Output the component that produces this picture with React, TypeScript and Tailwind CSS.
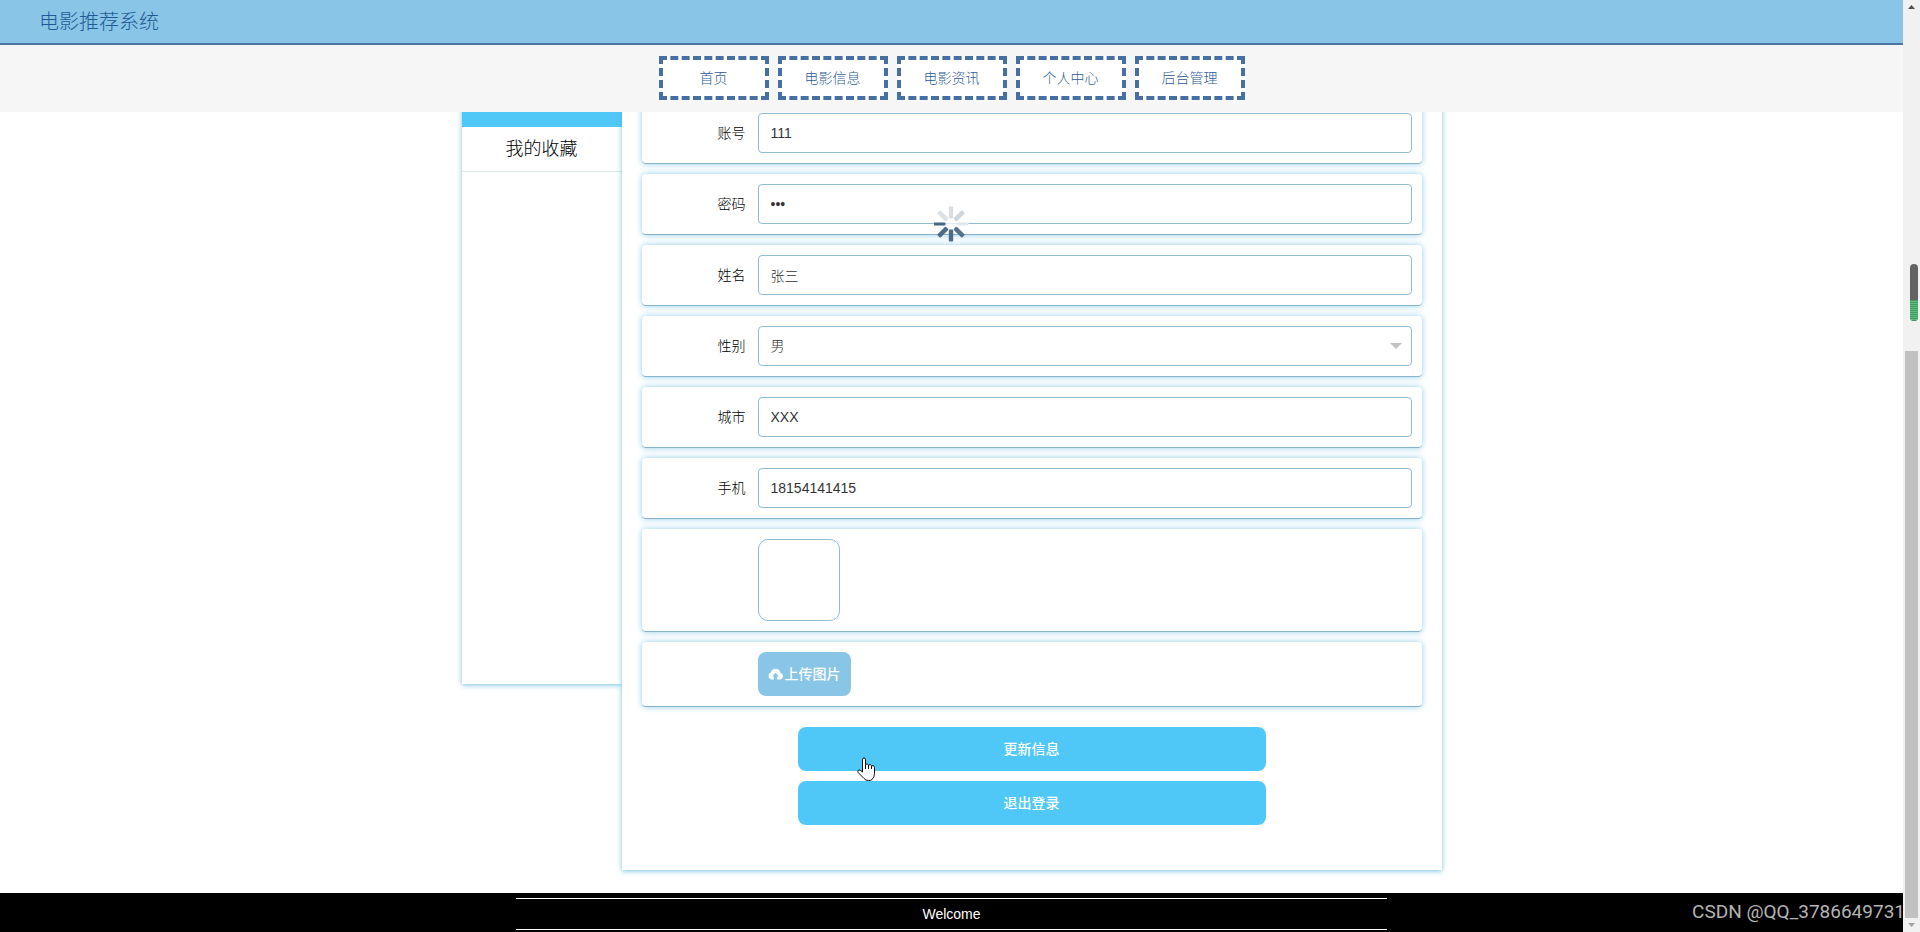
const navItems = ['首页', '电影信息', '电影资讯', '个人中心', '后台管理']

const labelClass = 'w-[106px] shrink-0 pr-3 text-right text-sm font-light text-black'
const fieldClass =
  'block h-10 w-full appearance-none rounded-[4px] border border-[#8fbdd3] bg-white px-3 text-sm font-light text-[#333] outline-none'
const rowClass =
  'flex items-center rounded-[4px] border-b border-[#86b4cd] bg-white p-[10px] shadow-[0_0_6px_rgba(100,185,222,0.7)]'
const actionClass = 'h-11 w-3/5 rounded-lg bg-[#50c8f7] text-sm font-medium text-white'

const fields = [
  { id: 'account', label: '账号', type: 'text', value: '111' },
  { id: 'password', label: '密码', type: 'password', value: '111' },
  { id: 'name', label: '姓名', type: 'text', value: '张三' },
  { id: 'gender', label: '性别', type: 'select', value: '男' },
  { id: 'city', label: '城市', type: 'text', value: 'XXX' },
  { id: 'mobile', label: '手机', type: 'text', value: '18154141415' },
]

// clockwise, starting at the top
const spokes = ['#d9dee3', '#cfd6dc', '#e3e8eb', '#58718a', '#4d6a86', '#4d6a86', '#456786', '#dce1e5']

function Spinner() {
  return (
    <svg
      className="pointer-events-none absolute top-[206px] left-1/2 z-20 size-9 -translate-x-1/2"
      viewBox="-17 -18 36 36"
      aria-hidden="true"
    >
      <circle r="6" fill="#fff" fillOpacity="0.7" />
      {spokes.map((color, i) => (
        <rect
          key={i}
          x={i === 2 || i === 6 ? -1.5 : -2.2}
          y="-17.5"
          width={i === 2 || i === 6 ? 3 : 4.4}
          height="12"
          rx="1"
          fill={color}
          transform={`rotate(${i * 45})`}
        />
      ))}
    </svg>
  )
}

function HandCursor() {
  return (
    <svg
      className="pointer-events-none absolute top-[30px] left-[59px]"
      width="19"
      height="25"
      viewBox="0 0 19 25"
      aria-hidden="true"
    >
      <path
        d="M5.5 15V2.6Q5.5 1 7 1T8.500 2.600V7.500Q10.500 6.200 11.500 8Q13.500 6.800 14.500 8.700Q17.500 7.800 17.500 10.500V16.500Q17.500 20 15 22.500Q14 23.500 11.500 23.500Q8.500 23.500 7 21.500L1.200 15.500Q.2 13.800 1.500 13Q2.800 12.400 5.500 15Z"
        fill="#fff"
        stroke="#111"
        strokeLinejoin="round"
      />
      <path d="M8.500 7.500V12M11.500 8V12M14.500 8.700V12" stroke="#111" fill="none" />
    </svg>
  )
}

function CloudUpload() {
  return (
    <svg width="15" height="12" viewBox="0 0 15 12" aria-hidden="true">
      <path
        d="M12.300 4.800A4.800 4.800 0 0 0 3 4.200A3.800 3.800 0 0 0 3.800 11.500H5.800V8.500H4.200L7.500 4.800L10.800 8.500H9.200V11.500H11.500A3.400 3.400 0 0 0 12.300 4.800Z"
        fill="#fff"
      />
    </svg>
  )
}

function ScrollRail() {
  return (
    <aside className="relative flex w-[17px] shrink-0 flex-col items-center bg-[#f1f1f1]" aria-hidden="true">
      <div className="flex h-[351px] justify-center pt-[5px]">
        <svg width="7" height="4" viewBox="0 0 7 4">
          <path d="M0 4L3.500 0L7 4Z" fill="#505050" />
        </svg>
      </div>
      <div className="w-[13px] flex-1 bg-[#c1c1c1]" />
      <div className="flex h-[14px] items-center">
        <svg width="7" height="4" viewBox="0 0 7 4">
          <path d="M0 0L3.500 4L7 0Z" fill="#a3a3a3" />
        </svg>
      </div>
      <div className="absolute top-[264px] right-[2px] flex h-[57px] w-2 flex-col overflow-hidden rounded-full bg-[#636363]">
        <div className="mt-9 flex-1 bg-[repeating-linear-gradient(#3f9a5e_0_1px,#62bd80_1px_2px)]" />
      </div>
    </aside>
  )
}

export default function App() {
  return (
    <div className="relative flex min-h-screen overflow-hidden bg-white font-['Liberation_Sans','Noto_Sans_CJK_SC',sans-serif]">
      <div className="relative flex min-w-0 flex-1 flex-col">
        <header className="relative z-10">
          <div className="flex h-[45px] items-center border-b-2 border-[#4a75a0] bg-[#88c5e6] pl-[39px]">
            <h1 className="text-xl font-light text-[#1f5a94]">电影推荐系统</h1>
          </div>
          <nav className="flex justify-center gap-[9px] bg-[#f6f6f6] pt-[11px] pb-3">
            {navItems.map((item) => (
              <a
                key={item}
                href="#"
                className="flex h-11 w-[110px] items-center justify-center border-4 border-dashed border-[#4670a3] bg-white text-sm font-light text-[#2f5c96]"
              >
                {item}
              </a>
            ))}
          </nav>
        </header>

        <div className="flex-1 overflow-hidden">
          <div className="mx-auto -mt-[29px] flex w-[980px] items-start">
            <aside className="h-[601px] w-40 bg-white shadow-[0_1px_5px_rgba(80,175,218,0.8)]">
              <div className="h-11 bg-[#50c8f7]" />
              <a
                href="#"
                className="flex h-[45px] items-center justify-center border-b border-[#dfe8e8] text-lg font-light text-black"
              >
                我的收藏
              </a>
            </aside>

            <main className="relative flex-1 bg-white p-5 pb-[45px] shadow-[0_1px_5px_rgba(80,175,218,0.8)]">
              <form className="flex flex-col gap-[10px]">
                {fields.map((field) => (
                  <div key={field.id} className={rowClass}>
                    <label htmlFor={field.id} className={labelClass}>
                      {field.label}
                    </label>
                    {field.type === 'select' ? (
                      <div className="relative flex-1">
                        <select id={field.id} className={fieldClass}>
                          <option>{field.value}</option>
                        </select>
                        <svg
                          className="pointer-events-none absolute top-[17px] right-[10px]"
                          width="12"
                          height="6"
                          viewBox="0 0 12 6"
                          aria-hidden="true"
                        >
                          <path d="M0 0H12L6 6Z" fill="#c2c2c2" />
                        </svg>
                      </div>
                    ) : (
                      <input id={field.id} type={field.type} defaultValue={field.value} className={fieldClass} />
                    )}
                  </div>
                ))}
                <div className={rowClass}>
                  <div className="ml-[106px] size-[82px] rounded-[10px] border border-[#8fbdd3]" />
                </div>
                <div className={rowClass}>
                  <button
                    type="button"
                    className="ml-[106px] flex h-11 w-[93px] items-center justify-center gap-[2px] rounded-lg bg-[#88c5e6] text-sm font-medium text-white"
                  >
                    <CloudUpload />
                    上传图片
                  </button>
                </div>
                <div className="relative mx-auto mt-[10px] flex w-full flex-col items-center gap-[10px]">
                  <button type="button" className={actionClass}>
                    更新信息
                  </button>
                  <button type="button" className={actionClass}>
                    退出登录
                  </button>
                  <div className="pointer-events-none absolute inset-y-0 w-3/5">
                    <HandCursor />
                  </div>
                </div>
              </form>
            </main>
          </div>
        </div>

        <footer className="bg-black pt-[5px] pb-[2px]">
          <p className="mx-auto flex h-8 w-[871px] items-center justify-center border-y border-white text-sm text-white">
            Welcome
          </p>
        </footer>
        <Spinner />
      </div>
      <ScrollRail />
      <p className="pointer-events-none absolute right-[15px] bottom-[6px] font-[Roboto,sans-serif] text-[19px] leading-7 text-[#b4b4b4]">
        CSDN @QQ_3786649731
      </p>
    </div>
  )
}
